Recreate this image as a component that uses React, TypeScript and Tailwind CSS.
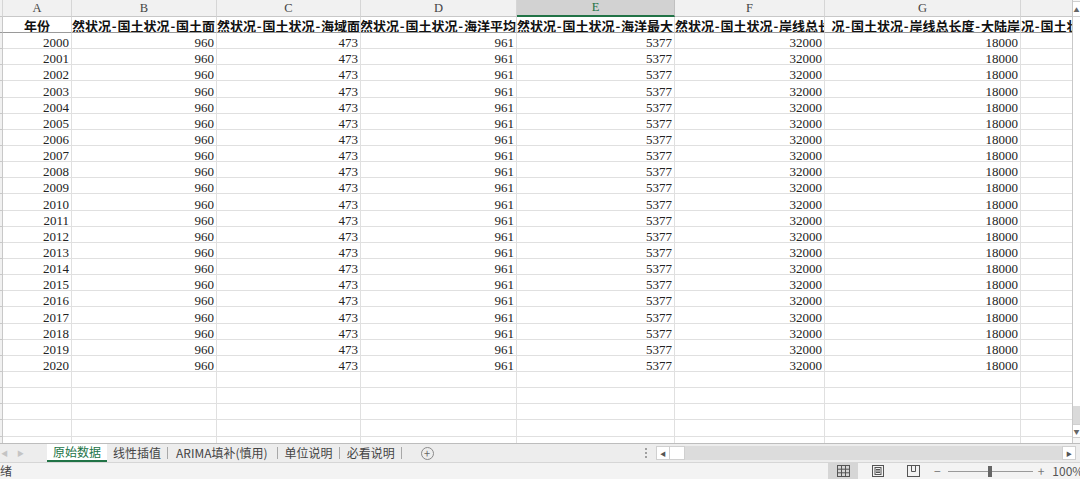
import React from "react";

const COLS = [3, 69, 145, 144, 156, 158, 150, 196, 60];
const LETTERS = ["", "A", "B", "C", "D", "E", "F", "G", ""];

type H = { text: string; align: "start" | "center" | "end" };
const HEADERS: H[] = [
  { text: "", align: "start" },
  { text: "年份", align: "center" },
  { text: "然状况-国土状况-国土面", align: "start" },
  { text: "然状况-国土状况-海域面", align: "start" },
  { text: "然状况-国土状况-海洋平均", align: "end" },
  { text: "然状况-国土状况-海洋最大", align: "start" },
  { text: "然状况-国土状况-岸线总长", align: "start" },
  { text: "况-国土状况-岸线总长度-大陆岸", align: "end" },
  { text: "况-国土状况-国土", align: "start" },
];

const years = Array.from({ length: 21 }, (_, i) => 2000 + i);

function HeaderText({ text }: { text: string }) {
  const parts = text.split("-");
  return (
    <span className="whitespace-nowrap">
      {parts.map((p, i) => (
        <React.Fragment key={i}>
          {i > 0 && <span className="inline-block w-[6.5px] text-center">-</span>}
          {p}
        </React.Fragment>
      ))}
    </span>
  );
}

export default function App() {
  const serif = { fontFamily: '"Liberation Serif", "Noto Sans CJK SC", serif' };
  return (
    <div
      className="w-[1080px] h-[479px] overflow-hidden bg-white flex flex-col text-[#222]"
      style={{ fontFamily: '"Noto Sans CJK SC", sans-serif' }}
    >
      {/* grid + vertical scrollbar */}
      <div className="flex h-[443px] shrink-0">
        <div className="w-[1072px] overflow-hidden flex flex-col">
          {/* column letters */}
          <div className="flex h-[17px] shrink-0">
            {COLS.map((w, i) => {
              const sel = i === 5;
              return (
                <div
                  key={i}
                  className={`shrink-0 flex items-center justify-center text-[12.5px] border-r ${
                    sel
                      ? "bg-[#d2d2d2] text-[#217346] border-b-2 border-b-[#217346] border-r-[#c0c0c0]"
                      : "bg-[#f1f1f1] text-[#444] border-b border-b-[#c8c8c8] border-r-[#d6d6d6]"
                  } ${i === 2 || i === 6 ? "border-r-[#8a8a8a]" : ""}`}
                  style={{ width: w, ...serif }}
                >
                  {LETTERS[i]}
                </div>
              );
            })}
          </div>
          {/* header row */}
          <div className="flex h-[16px] shrink-0">
            {COLS.map((w, i) => {
              const h = HEADERS[i];
              return (
                <div
                  key={i}
                  className={`shrink-0 overflow-hidden flex items-center pt-[1px] text-[13px] leading-none font-bold text-[#111] border-b border-b-[#9a9a9a] border-r ${
                    i === 0 ? "bg-[#f1f1f1] border-r-[#c8c8c8]" : "border-r-[#dadada]"
                  } ${i === 2 || i === 6 ? "border-r-[#8a8a8a]" : ""} ${
                    h.align === "center" ? "justify-center" : h.align === "end" ? "justify-end" : "justify-start"
                  }`}
                  style={{ width: w, fontFamily: '"Noto Sans CJK SC", serif' }}
                >
                  <HeaderText text={h.text} />
                </div>
              );
            })}
          </div>
          {/* data rows */}
          {years.map((y) => {
            const vals = ["", String(y), "960", "473", "961", "5377", "32000", "18000", ""];
            return (
              <div key={y} className="flex h-[16.15px] shrink-0">
                {COLS.map((w, i) => (
                  <div
                    key={i}
                    className={`shrink-0 flex items-end justify-end pr-[2px] text-[13px] leading-[11px] text-[#222] border-b border-r ${
                      i === 0 ? "bg-[#f1f1f1] border-[#c8c8c8]" : "border-[#e0e0e0]"
                    }`}
                    style={{ width: w, ...serif }}
                  >
                    {vals[i]}
                  </div>
                ))}
              </div>
            );
          })}
          {/* empty rows */}
          {[0, 1, 2, 3, 4].map((r) => (
            <div key={r} className="flex h-[16.15px] shrink-0">
              {COLS.map((w, i) => (
                <div
                  key={i}
                  className={`shrink-0 border-b border-r ${
                    i === 0 ? "bg-[#f1f1f1] border-[#c8c8c8]" : "border-[#e0e0e0]"
                  }`}
                  style={{ width: w }}
                />
              ))}
            </div>
          ))}
        </div>
        {/* vertical scrollbar */}
        <div className="w-[8px] flex flex-col bg-[#f7f7f7] border-l border-[#c8c8c8]">
          <div className="h-[16px] mt-[1px] bg-white border-y border-[#d0d0d0] flex items-center justify-center text-[6px] text-[#666]">
            ▲
          </div>
          <div className="flex-1 bg-white" />
          <div className="h-[18px] bg-[#dadada]" />
          <div className="h-[14px] bg-white border-y border-[#d0d0d0] flex items-center justify-center text-[6px] text-[#666]">
            ▼
          </div>
          <div className="h-[5px]" />
        </div>
      </div>

      {/* sheet tabs + horizontal scroll */}
      <div className="h-[19px] shrink-0 flex items-stretch bg-[#ededed] border-t border-[#bdbdbd] text-[12px] text-[#444]">
        <div className="w-[47px] shrink-0 flex items-center text-[7px] text-[#c4c4c4]">
          <span className="ml-[1px]">◀</span>
          <span className="ml-[9px]">▶</span>
        </div>
        <div className="w-[60px] shrink-0 bg-white text-[#217346] flex items-center justify-center border-b-2 border-[#217346]">
          原始数据
        </div>
        <div className="w-[538px] shrink-0 flex items-center">
          <span className="ml-[6px]">线性插值</span>
          <span className="ml-[6px] w-px h-[12px] bg-[#a8a8a8]" />
          <span className="ml-[8px]">ARIMA填补(慎用)</span>
          <span className="ml-[9px] w-px h-[12px] bg-[#a8a8a8]" />
          <span className="ml-[7px]">单位说明</span>
          <span className="ml-[6px] w-px h-[12px] bg-[#a8a8a8]" />
          <span className="ml-[7px]">必看说明</span>
          <span className="ml-[6px] w-px h-[12px] bg-[#a8a8a8]" />
          <span className="ml-[19px] w-[13px] h-[13px] rounded-full border border-[#8a8a8a] flex items-center justify-center text-[11px] leading-none text-[#666]">
            +
          </span>
        </div>
        <div className="w-[2px] flex flex-col items-center justify-center gap-[2px]">
          <span className="w-[2px] h-[2px] bg-[#a0a0a0]" />
          <span className="w-[2px] h-[2px] bg-[#a0a0a0]" />
          <span className="w-[2px] h-[2px] bg-[#a0a0a0]" />
        </div>
        <div className="ml-[9px] flex items-center flex-1">
          <div className="flex h-[14px] flex-1 items-stretch">
            <div className="w-[14px] bg-white border border-[#d0d0d0] flex items-center justify-center text-[6px] text-[#555]">
              ◀
            </div>
            <div className="w-[15px] bg-white border-y border-r border-[#d0d0d0]" />
            <div className="flex-1 bg-[#dcdcdc]" />
            <div className="w-[14px] bg-white border border-[#d0d0d0] flex items-center justify-center text-[6px] text-[#555]">
              ▶
            </div>
            <div className="w-[4px]" />
          </div>
        </div>
      </div>

      {/* status bar */}
      <div className="h-[17px] shrink-0 flex items-stretch bg-[#f3f3f3] border-t border-[#d6d6d6] text-[12px] text-[#444]">
        <div className="w-[828px] shrink-0 overflow-hidden flex items-center">
          <span className="whitespace-nowrap -ml-[12px]">就绪</span>
        </div>
        <div className="w-[30px] shrink-0 bg-[#d6d6d6] flex items-center justify-center">
          <svg width="13" height="12" viewBox="0 0 13 12" fill="none" stroke="#555" strokeWidth="1">
            <rect x="0.5" y="0.5" width="12" height="11" />
            <path d="M4.5 0.5V11.5M8.5 0.5V11.5M0.5 4.2H12.5M0.5 7.8H12.5" />
          </svg>
        </div>
        <div className="ml-[13px] w-[14px] shrink-0 flex items-center justify-center">
          <svg width="12" height="12" viewBox="0 0 12 12" fill="none" stroke="#555" strokeWidth="1">
            <rect x="0.5" y="0.5" width="11" height="11" />
            <rect x="3" y="2.5" width="6" height="7" />
            <path d="M4 4.5H8M4 6H8M4 7.5H8" />
          </svg>
        </div>
        <div className="ml-[21px] w-[14px] shrink-0 flex items-center justify-center">
          <svg width="13" height="12" viewBox="0 0 13 12" fill="none" stroke="#555" strokeWidth="1">
            <rect x="0.5" y="0.5" width="12" height="11" />
            <path d="M4.5 0.5V6.5H8.5V0.5" />
          </svg>
        </div>
        <div className="ml-[14px] flex items-center text-[#777] shrink-0">
          <span className="text-[12px]">−</span>
          <div className="relative ml-[7px] w-[85px] h-[1px] bg-[#9a9a9a]">
            <div className="absolute left-[40px] -top-[5px] w-[4px] h-[11px] bg-[#666]" />
          </div>
          <span className="ml-[5px] text-[12px]">+</span>
          <span className="ml-[8px] text-[12px] text-[#555] whitespace-nowrap">100%</span>
        </div>
      </div>
    </div>
  );
}
